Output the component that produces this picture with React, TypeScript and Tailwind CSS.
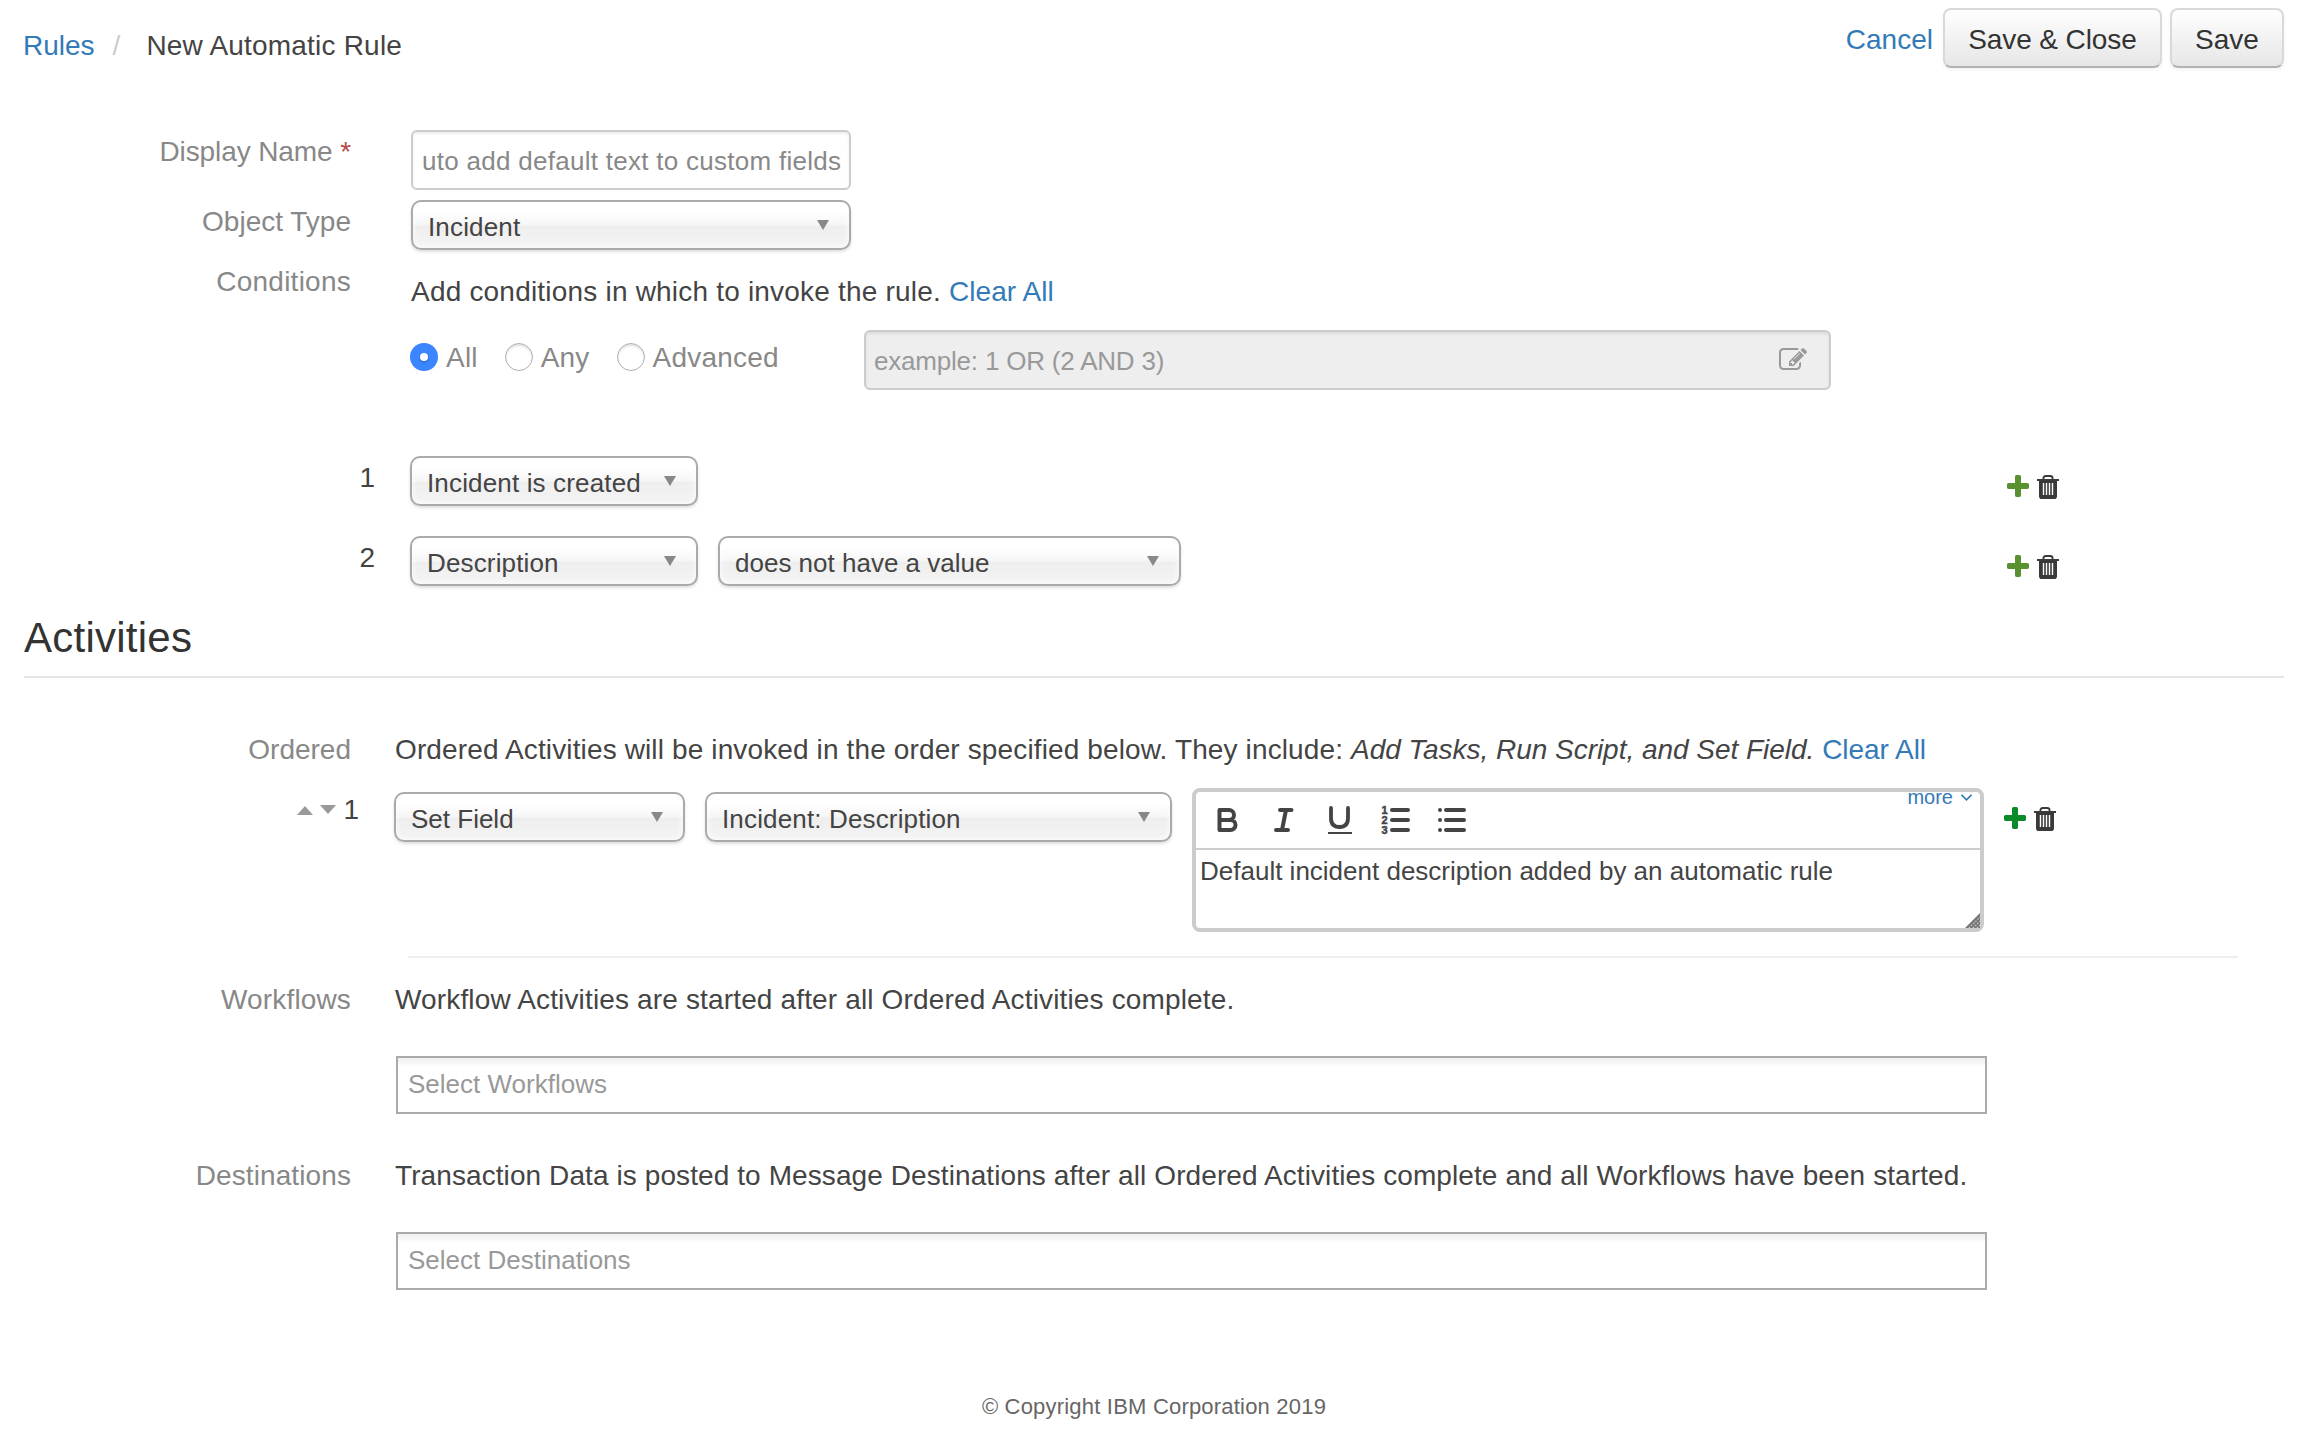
import type { ReactNode } from "react";

const selectLook =
  "flex h-[50px] shrink-0 items-center justify-between rounded-[10px] border-2 border-[#aaa] bg-[linear-gradient(#fff_20%,#f6f6f6_50%,#eee_52%,#f4f4f4_100%)] pt-[4px] pl-[15px] text-[26px] text-[#444] shadow-[0_2px_3px_rgba(0,0,0,0.12),inset_0_0_6px_#fff]";

function Select({ label, className }: { label: string; className: string }) {
  return (
    <div className={`${selectLook} ${className}`}>
      <span>{label}</span>
      <svg width="12" height="10" viewBox="0 0 12 10" className="mb-1">
        <path d="M0 0H12L6 10Z" fill="#888" />
      </svg>
    </div>
  );
}

function PlusIcon({ color }: { color: string }) {
  return (
    <svg width="28" height="28" viewBox="0 0 1792 1792" fill={color}>
      <path d="M1600 736v192q0 40-28 68t-68 28h-416v416q0 40-28 68t-68 28h-192q-40 0-68-28t-28-68v-416h-416q-40 0-68-28t-28-68v-192q0-40 28-68t68-28h416v-416q0-40 28-68t68-28h192q40 0 68 28t28 68v416h416q40 0 68 28t28 68z" />
    </svg>
  );
}

function TrashIcon() {
  return (
    <svg width="22" height="24" viewBox="0 0 22 24" fill="none">
      <path d="M6.4 4.5V3.4Q6.4 1 8.8 1H13.2Q15.6 1 15.6 3.4V4.5" stroke="#3a3a3a" strokeWidth="1.8" />
      <path d="M0 4H22V6H20V21.2Q20 24 17.2 24H4.8Q2 24 2 21.2V6H0Z" fill="#3a3a3a" />
      <path d="M6.5 8V20M9.500 8V20M12.500 8V20M15.500 8V20" stroke="#fff" strokeWidth="1.4" />
    </svg>
  );
}

function EditIcon() {
  return (
    <svg width="28" height="28" viewBox="0 0 1792 1792" fill="#999">
      <path d="M888 1184l116-116-152-152-116 116v56h96v96h56zm440-720q-16-16-33 1l-350 350q-17 17-1 33t33-1l350-350q17-17 1-33zm80 594v190q0 119-84.5 203.5t-203.5 84.5h-832q-119 0-203.5-84.5t-84.5-203.5v-832q0-119 84.5-203.5t203.5-84.5h832q63 0 117 25 15 7 18 23 3 17-9 29l-49 49q-14 14-32 8-23-6-45-6h-832q-66 0-113 47t-47 113v832q0 66 47 113t113 47h832q66 0 113-47t47-113v-126q0-13 9-22l64-64q15-15 35-7t20 29zm-96-738l288 288-672 672h-288v-288zm444 132l-92 92-288-288 92-92q28-28 68-28t68 28l152 152q28 28 28 68t-28 68z" />
    </svg>
  );
}

// add / remove pair at the end of a row
function RowActions({ color = "#5a9130", className }: { color?: string; className: string }) {
  return (
    <div className={`flex items-center ${className}`}>
      <PlusIcon color={color} />
      <span className="ml-[5px]">
        <TrashIcon />
      </span>
    </div>
  );
}

function Label({ children, className = "" }: { children: ReactNode; className?: string }) {
  return (
    <div className={`w-[351px] shrink-0 text-right text-[28px] leading-[42px] text-[#888] ${className}`}>
      {children}
    </div>
  );
}

function Radio({ label, checked = false }: { label: string; checked?: boolean }) {
  return (
    <label className="flex items-center gap-2 text-[28px] leading-10 tracking-[0.2px] text-[#888]">
      {checked ? (
        <span className="flex size-7 items-center justify-center rounded-full bg-[#3b86fe]">
          <span className="size-2 rounded-full bg-white shadow-[0_1px_2px_rgba(0,0,0,0.3)]" />
        </span>
      ) : (
        <span className="size-7 rounded-full border border-[#b0b0b0] bg-white shadow-[inset_0_2px_2px_rgba(0,0,0,0.12)]" />
      )}
      <span className="pt-[2px]">{label}</span>
    </label>
  );
}

function ConditionRow({ index, children }: { index: number; children: ReactNode }) {
  return (
    <div className="flex h-[50px]">
      <div className="w-[375px] shrink-0 text-right text-[28px] leading-[43px] text-[#444]">{index}</div>
      <div className="ml-[35px] flex w-[1594px] gap-5">{children}</div>
      <RowActions className="mt-[17px] h-7 shrink-0" />
    </div>
  );
}

function ToolbarIcons() {
  return (
    <svg
      width="260"
      height="32"
      viewBox="0 0 260 32"
      fill="none"
      stroke="#444"
      strokeWidth="4"
      strokeLinecap="round"
      strokeLinejoin="round"
    >
      {/* bold */}
      <path d="M7.500 6H17A4.8 4.8 0 0 1 17 16H7.500M17 16H18.500A5 5 0 0 1 18.500 26H7.500V6" />
      {/* italic */}
      <path d="M68 6H79.500M64 26H76M74 6L70 26" />
      {/* underline */}
      <path d="M119 4V14Q119 23 127.500 23Q136 23 136 14V4" strokeWidth="3.8" />
      <path d="M116 29H140" strokeWidth="2" strokeLinecap="butt" />
      {/* ordered list */}
      <path d="M180 6H196M180 16H196M180 26H196" />
      {/* bullet list */}
      <path d="M234 6H252M234 16H252M234 26H252" />
      <path d="M228 6H228.010M228 16H228.010M228 26H228.010" />
      <g fill="#444" strokeWidth="0.5" fontFamily="Liberation Sans" fontSize="11" fontWeight="700">
        <text x="169.500" y="10">1</text>
        <text x="169.500" y="20">2</text>
        <text x="169.500" y="30">3</text>
      </g>
    </svg>
  );
}

function Editor() {
  return (
    <div className="relative h-36 w-[792px] shrink-0 rounded-lg border-4 border-[#ccc] bg-white">
      <div className="flex h-[58px] items-start justify-between border-b-2 border-[#ccc] pt-3 pl-4">
        <ToolbarIcons />
        <span className="-mt-[14px] mr-2 flex h-[14px] items-center gap-2 text-[20px] text-[#337ab7]">
          more
          <svg width="11" height="7" viewBox="0 0 11 7" fill="none" stroke="#337ab7" strokeWidth="1.6">
            <path d="M.5 .8L5.500 5.800L10.500 .8" />
          </svg>
        </span>
      </div>
      <p className="pt-px pl-1 text-[26px] leading-10 text-[#444]">
        Default incident description added by an automatic rule
      </p>
      <svg width="15" height="15" viewBox="0 0 15 15" className="absolute right-0 bottom-0">
        <path d="M15 0V15H0Z" fill="#777" />
        <path d="M4 15L15 4M8 15L15 8M12 15L15 12" stroke="#ccc" strokeWidth="1.2" strokeDasharray="1.500 1.500" />
      </svg>
    </div>
  );
}

function PickerBox({ placeholder }: { placeholder: string }) {
  return (
    <div className="ml-[396px] flex h-[58px] w-[1591px] items-center border-2 border-[#aaa] bg-[linear-gradient(#eee_0,#fff_9px)] pb-[2px] pl-[10px] text-[26px] text-[#999]">
      {placeholder}
    </div>
  );
}

const buttonLook =
  "flex h-[60px] items-center rounded-lg border-2 border-[#d9d9d9] border-b-[#b3b3b3] bg-[linear-gradient(#fff,#e6e6e6)] pt-[3px] text-[28px] text-[#333] shadow-[0_2px_4px_rgba(0,0,0,0.05)]";

export default function App() {
  return (
    <div className="flex h-[1450px] w-[2300px] flex-col overflow-hidden bg-white font-['Liberation_Sans',Arial,sans-serif] text-[28px] text-[#444]">
      <header className="flex h-[130px] shrink-0 justify-between pr-4 pl-[23px]">
        <nav className="mt-[26px] flex h-10 leading-10">
          <a className="text-[#337ab7]">Rules</a>
          <span className="ml-[18px] text-[#ccc]">/</span>
          <span className="ml-[26px] tracking-[0.2px]">New Automatic Rule</span>
        </nav>
        <div className="mt-2 flex h-[60px] items-center">
          <a className="mr-[10px] pt-[3px] text-[#337ab7]">Cancel</a>
          <button className={`${buttonLook} w-[219px] justify-center tracking-[-0.1px]`}>Save &amp; Close</button>
          <button className={`${buttonLook} ml-2 w-[114px] justify-center`}>Save</button>
        </div>
      </header>

      <div className="flex h-[60px] shrink-0">
        <Label className="pt-px tracking-[-0.1px]">
          Display Name <span className="text-[#b94a48]">*</span>
        </Label>
        <div className="ml-[60px] flex w-[440px] items-center overflow-hidden rounded-md border-2 border-[#ccc] pt-[2px] pl-[9px] text-[26px] tracking-[0.28px] whitespace-nowrap text-[#888] shadow-[inset_0_2px_3px_rgba(0,0,0,0.07)]">
          uto add default text to custom fields
        </div>
      </div>

      <div className="mt-[10px] flex h-[50px] shrink-0">
        <Label className="pt-px">Object Type</Label>
        <Select label="Incident" className="ml-[60px] w-[440px] pr-5 tracking-[0.15px]" />
      </div>

      <div className="mt-[10px] flex h-[70px] shrink-0">
        <Label className="pt-px tracking-[0.25px]">Conditions</Label>
        <p className="ml-[60px] pt-[11px] leading-[42px] tracking-[0.2px]">
          Add conditions in which to invoke the rule. <a className="tracking-[0.05px] text-[#337ab7]">Clear All</a>
        </p>
      </div>

      <div className="ml-[410px] flex h-[60px] shrink-0">
        <div className="flex h-[54px] w-[454px] items-center gap-[27px]">
          <Radio label="All" checked />
          <Radio label="Any" />
          <Radio label="Advanced" />
        </div>
        <div className="flex w-[967px] items-center justify-between rounded-md border-2 border-[#ccc] bg-[#eee] pr-[22px] pl-2 text-[26px] tracking-[-0.2px] text-[#999] shadow-[inset_0_2px_3px_rgba(0,0,0,0.08)]">
          <span className="pt-[2px]">example: 1 OR (2 AND 3)</span>
          <EditIcon />
        </div>
      </div>

      <div className="mt-[66px] flex shrink-0 flex-col gap-[30px]">
        <ConditionRow index={1}>
          <Select label="Incident is created" className="w-[288px] pr-5 tracking-[0.15px]" />
        </ConditionRow>
        <ConditionRow index={2}>
          <Select label="Description" className="w-[288px] pr-5 tracking-[0.15px]" />
          <Select label="does not have a value" className="w-[463px] pr-5" />
        </ConditionRow>
      </div>

      <h2 className="mr-4 ml-6 mt-[26px] h-[66px] shrink-0 border-b-2 border-[#e5e5e5] pt-px text-[42px] leading-[50px] tracking-[0.25px] text-[#333]">
        Activities
      </h2>

      <div className="mt-[51px] flex h-10 shrink-0 leading-[42px]">
        <Label>Ordered</Label>
        <p className="ml-11 tracking-[0.13px]">
          Ordered Activities will be invoked in the order specified below. They include:{" "}
          <i className="tracking-[-0.03px]">Add Tasks, Run Script, and Set Field.</i>{" "}
          <a className="tracking-[-0.05px] text-[#337ab7]">Clear All</a>
        </p>
      </div>

      <div className="mt-[19px] flex h-36 shrink-0">
        <div className="mt-[2px] flex h-10 w-[359px] shrink-0 items-center justify-end leading-10">
          <svg width="39" height="10" viewBox="0 0 39 10" fill="#999" className="mr-[7px]">
            <path d="M0 10H16L8 1ZM23 0H39L31 9Z" />
          </svg>
          1
        </div>
        <Select label="Set Field" className="mt-1 ml-[35px] w-[291px] pr-5" />
        <Select label="Incident: Description" className="mt-1 mr-5 ml-5 w-[467px] pr-5 tracking-[0.15px]" />
        <Editor />
        <RowActions color="#098b2b" className="mt-[17px] ml-[17px] h-7" />
      </div>

      <div className="mt-6 mr-[62px] ml-[408px] h-[2px] shrink-0 bg-[#eee]" />

      <div className="mt-[21px] flex h-[77px] shrink-0 leading-[42px]">
        <Label className="tracking-[0.15px]">Workflows</Label>
        <p className="ml-11 tracking-[0.15px]">
          Workflow Activities are started after all Ordered Activities complete.
        </p>
      </div>
      <PickerBox placeholder="Select Workflows" />

      <div className="mt-[41px] flex h-[77px] shrink-0 leading-[42px]">
        <Label className="tracking-[0.1px]">Destinations</Label>
        <p className="ml-11 tracking-[0.09px]">
          Transaction Data is posted to Message Destinations after all Ordered Activities complete and all Workflows
          have been started.
        </p>
      </div>
      <PickerBox placeholder="Select Destinations" />

      <footer className="mt-[97px] pl-2 text-center text-[22px] leading-10 tracking-[0.2px] text-[#666]">
        © Copyright IBM Corporation 2019
      </footer>
    </div>
  );
}
